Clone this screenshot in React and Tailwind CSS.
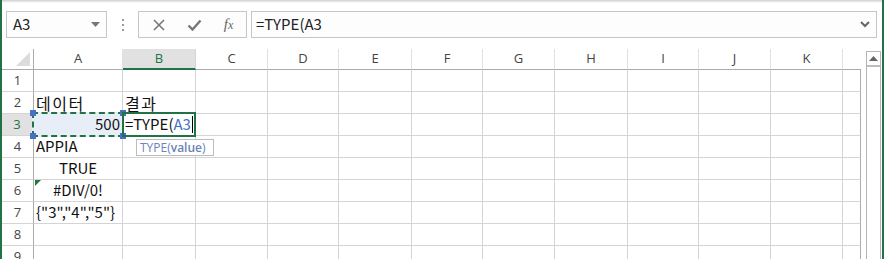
import React from 'react';

const COLS = [
  { key: 'A', w: 89 },
  { key: 'B', w: 73 },
  { key: 'C', w: 72 },
  { key: 'D', w: 71 },
  { key: 'E', w: 73 },
  { key: 'F', w: 71 },
  { key: 'G', w: 72 },
  { key: 'H', w: 73 },
  { key: 'I', w: 71 },
  { key: 'J', w: 72 },
  { key: 'K', w: 72 },
  { key: '', w: 18 },
];
const ROWS = [1, 2, 3, 4, 5, 6, 7, 8, 9];

const cellFont = { fontFamily: '"Noto Sans CJK KR", "Noto Sans", sans-serif' };

const NameBox = () => (
  <div className="ml-[4px] flex h-[27px] w-[101px] items-center justify-between border border-[#c6c6c6] bg-[#fdfdfd] pl-[6px] pr-[6px]">
    <span className="text-[15px] text-[#222]" style={cellFont}>A3</span>
    <svg width="9" height="5" viewBox="0 0 9 5"><path d="M0 0h9L4.5 5z" fill="#777" /></svg>
  </div>
);

const FormulaButtons = () => (
  <div className="flex h-[27px] w-[109px] items-center border border-[#c6c6c6] bg-[#fdfdfd]">
    <div className="flex w-[38px] justify-center pl-[2px]">
      <svg width="12" height="12" viewBox="0 0 12 12">
        <path d="M1 1l10 10M11 1L1 11" stroke="#777" strokeWidth="1.6" />
      </svg>
    </div>
    <div className="flex w-[34px] justify-center">
      <svg width="15" height="12" viewBox="0 0 15 12">
        <path d="M1.5 6.5l4 4L13.5 1.5" stroke="#777" strokeWidth="2.4" fill="none" />
      </svg>
    </div>
    <div className="flex w-[35px] justify-center">
      <span className="text-[15px] italic text-[#666]" style={{ fontFamily: '"Liberation Serif", serif' }}>
        f<span className="text-[12px]">x</span>
      </span>
    </div>
  </div>
);

const FormulaBar = () => (
  <div className="flex h-[46px] items-start pt-[8px]">
    <NameBox />
    <div className="flex h-[27px] w-[31px] flex-col items-center justify-center gap-[3px]">
      <span className="h-[2px] w-[2px] bg-[#999]" />
      <span className="h-[2px] w-[2px] bg-[#999]" />
      <span className="h-[2px] w-[2px] bg-[#999]" />
    </div>
    <FormulaButtons />
    <div className="ml-[4px] flex h-[27px] w-[626px] items-center justify-between border border-[#c6c6c6] bg-[#fdfdfd] pl-[4px] pr-[6px]">
      <span className="text-[15px] text-[#222]" style={cellFont}>=TYPE(A3</span>
      <svg width="10" height="7" viewBox="0 0 10 7">
        <path d="M1 1l4 4 4-4" stroke="#666" strokeWidth="2" fill="none" />
      </svg>
    </div>
  </div>
);

const HeaderRow = () => (
  <div className="flex h-[21px]">
    <div className="relative h-[21px] w-[32px] border-b border-r border-[#ababab] bg-white">
      <svg className="absolute bottom-[3px] right-[3px]" width="14" height="14" viewBox="0 0 14 14">
        <path d="M14 0v14H0z" fill="#dcdcdc" />
      </svg>
    </div>
    {COLS.map((c) => {
      const active = c.key === 'B';
      return (
        <div
          key={c.key || 'L'}
          style={{ width: c.w }}
          className={
            active
              ? 'flex h-[21px] items-center justify-center border-b-2 border-r border-b-[#217346] border-r-[#d4d4d4] bg-[#e1e1e1] pt-[1px] text-[13px] text-[#217346]'
              : c.key
                ? 'flex h-[21px] items-center justify-center border-b border-r border-b-[#ababab] border-r-[#e1e1e1] bg-white text-[13px] text-[#444]'
                : 'h-[21px] border-b border-b-[#ababab] bg-white'
          }
        >
          <span style={{ fontFamily: '"Open Sans", sans-serif' }}>{c.key}</span>
        </div>
      );
    })}
  </div>
);

const cellContent = {
  'A2': { text: '데이터', align: 'justify-start', ko: true },
  'B2': { text: '결과', align: 'justify-start', ko: true },
  'A3': { text: '500', align: 'justify-end' },
  'A4': { text: 'APPIA', align: 'justify-start' },
  'A5': { text: 'TRUE', align: 'justify-center' },
  'A6': { text: '#DIV/0!', align: 'justify-center' },
  'A7': { text: '{"3","4","5"}', align: 'justify-start' },
};

const Cell = ({ col, row }) => {
  const id = `${col.key}${row}`;
  const content = cellContent[id];
  const isLast = !col.key;
  return (
    <div
      style={{ width: col.w }}
      className={
        isLast
          ? 'relative h-[22px] border-b border-r border-b-[#d4d4d4] border-r-[#ababab]'
          : 'relative h-[22px] border-b border-r border-[#d4d4d4]'
      }
    >
      {id === 'A3' ? (
        <div className="absolute inset-[-2px] z-10 bg-[#e8eef8]">
          <div className="absolute inset-0 border-[2.5px] border-dashed border-[#217346]" />
          <span className="absolute left-[-2px] top-[-2px] h-[6px] w-[6px] bg-[#4472c4]" />
          <span className="absolute right-[-2px] top-[-2px] h-[6px] w-[6px] bg-[#4472c4]" />
          <span className="absolute bottom-[-2px] left-[-2px] h-[6px] w-[6px] bg-[#4472c4]" />
          <span className="absolute bottom-[-2px] right-[-2px] h-[6px] w-[6px] bg-[#4472c4]" />
        </div>
      ) : null}
      {id === 'B3' ? (
        <>
          <div className="absolute inset-x-[-1px] inset-y-[-2px] z-20 border-2 border-[#217346]" />
          <div className="absolute left-[2px] top-0 z-30 flex h-full items-center text-[15px] text-[#111]" style={cellFont}>
            <span>=TYPE(</span>
            <span className="text-[#4472c4]">A3</span>
            <span className="ml-[1px] h-[17px] w-[1px] bg-black" />
          </div>
          <div
            className="absolute left-[13px] top-[25px] z-40 flex h-[17px] w-[78px] items-center whitespace-nowrap border border-[#bdbdbd] bg-white pl-[3px] text-[12px] text-[#6a83b8]"
            style={{ fontFamily: '"Open Sans", sans-serif' }}
          >
            TYPE(<b className="font-semibold">value</b>)
          </div>
        </>
      ) : null}
      {id === 'A6' ? (
        <svg className="absolute left-[1px] top-0 z-20" width="6" height="6" viewBox="0 0 6 6">
          <path d="M0 0h6L0 6z" fill="#1e7a3c" />
        </svg>
      ) : null}
      {content ? (
        <div
          className={
            content.ko
              ? `absolute inset-0 z-30 flex items-center px-[2px] text-[16px] tracking-[1.5px] text-[#111] ${content.align}`
              : `absolute inset-0 z-30 flex items-center px-[2px] text-[15px] text-[#111] ${content.align}`
          }
          style={cellFont}
        >
          {content.text}
        </div>
      ) : null}
    </div>
  );
};

const GridRow = ({ row }) => {
  const active = row === 3;
  return (
    <div className="flex h-[22px]">
      <div
        className={
          active
            ? 'flex h-[22px] w-[32px] items-center justify-center border-b border-r-2 border-b-[#d4d4d4] border-r-[#217346] bg-[#e1e1e1] text-[13px] text-[#217346]'
            : 'flex h-[22px] w-[32px] items-center justify-center border-b border-r border-b-[#d4d4d4] border-r-[#ababab] bg-white text-[13px] text-[#444]'
        }
        style={{ fontFamily: '"Open Sans", sans-serif' }}
      >
        {row}
      </div>
      {COLS.map((c) => (
        <Cell key={c.key || 'L'} col={c} row={row} />
      ))}
    </div>
  );
};

const Scrollbar = () => (
  <div className="mt-[2px] flex w-[15px] flex-col border border-[#b5b5b5] bg-white">
    <div className="flex h-[15px] items-center justify-center border-b-2 border-[#bdbdbd]">
      <svg width="9" height="5" viewBox="0 0 9 5"><path d="M0 5h9L4.5 0z" fill="#666" /></svg>
    </div>
    <div className="h-[300px]" />
  </div>
);

export default function App() {
  return (
    <div className="h-[259px] w-[884px] overflow-hidden border-x-2 border-[#217346] bg-white">
      <div className="h-[3px] bg-gradient-to-b from-[#cfcfcf] to-white" />
      <FormulaBar />
      <div className="flex">
        <div className="w-[861px]">
          <HeaderRow />
          {ROWS.map((r) => (
            <GridRow key={r} row={r} />
          ))}
        </div>
        <div className="ml-[3px]">
          <Scrollbar />
        </div>
      </div>
    </div>
  );
}
